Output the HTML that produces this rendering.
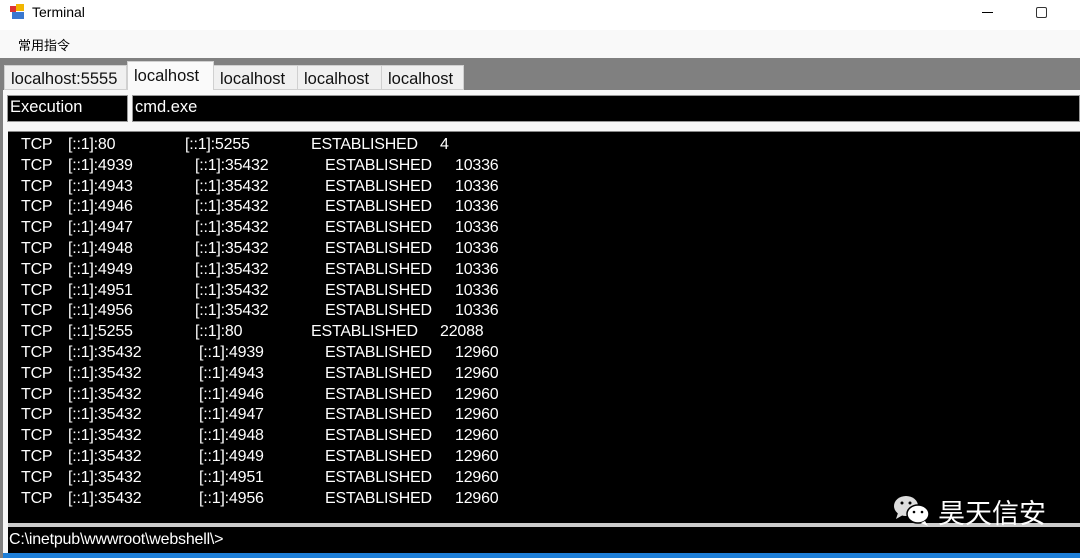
<!DOCTYPE html>
<html><head><meta charset="utf-8"><style>
body{margin:0;width:1080px;height:558px;overflow:hidden;background:#fff;position:relative;font-family:"Liberation Sans","Noto Sans CJK SC",sans-serif}
div,span{position:absolute}
.t{font-size:16px;color:#000;white-space:nowrap}
.w{color:#fff;font-family:"Liberation Sans Narrow","Liberation Sans",sans-serif;font-size:16px;white-space:nowrap;letter-spacing:-0.2px}
.tab{top:65px;height:25px;background:#f0f0f0;border:1px solid #d0d0d0;box-sizing:border-box;font-size:16.5px;color:#111;line-height:26px;padding-left:6px}
</style></head><body>
<div style="left:10px;top:6px;width:6px;height:6px;background:#d33"></div>
<div style="left:16px;top:4px;width:8px;height:7px;background:#f2b600"></div>
<div style="left:12px;top:12px;width:12px;height:7px;background:#3a78d0"></div>
<div class="t" style="left:32px;top:4px;font-size:14px">Terminal</div>
<div style="left:982px;top:12px;width:11px;height:1px;background:#000"></div>
<div style="left:1036px;top:7px;width:9px;height:9px;border:1.5px solid #333;border-radius:2px"></div>
<div style="left:0;top:30px;width:1080px;height:28px;background:#f9f9f9"></div>
<div class="t" style="left:18px;top:35px;font-size:13px">常用指令</div>
<div style="left:0;top:58px;width:1080px;height:32px;background:#808080"></div>
<div style="left:0;top:58px;width:3px;height:500px;background:#808080"></div>
<div class="tab" style="left:4px;width:123px">localhost:5555</div>
<div class="tab" style="left:127px;top:61px;height:30px;width:87px;background:#fafafa;line-height:28px">localhost</div>
<div class="tab" style="left:213px;width:85px">localhost</div>
<div class="tab" style="left:297px;width:85px">localhost</div>
<div class="tab" style="left:381px;width:83px">localhost</div>
<div style="left:3px;top:90px;width:1077px;height:468px;background:#f8f8f8"></div>
<div style="left:7px;top:95px;width:121px;height:27px;background:#000;border:1px solid #999;box-sizing:border-box"></div>
<div class="t" style="left:10px;top:98px;color:#fff;font-size:16.5px">Execution</div>
<div style="left:132px;top:95px;width:948px;height:27px;background:#000;border:1px solid #999;box-sizing:border-box"></div>
<div class="t" style="left:135px;top:98px;color:#fff;font-size:16.5px">cmd.exe</div>
<div style="left:8px;top:131px;width:1072px;height:392px;background:#000;border-top:1px solid #888"></div>
<div style="left:8px;top:523px;width:1072px;height:4px;background:#ccc"></div>
<div style="left:8px;top:527px;width:1072px;height:26px;background:#000"></div>
<div class="w" style="left:9px;top:531px">C:\inetpub\wwwroot\webshell\&gt;</div>
<div style="left:3px;top:553px;width:1077px;height:5px;background:#1e7fd8"></div>
<div id="rows"></div>
<svg style="position:absolute;left:892px;top:493px" width="42" height="34" viewBox="0 0 42 34"><ellipse cx="14" cy="13" rx="12" ry="10" fill="#ddd"/><path d="M6 20 L4 26 L11 22Z" fill="#ddd"/><ellipse cx="26" cy="21" rx="11" ry="9" fill="#fff" stroke="#000" stroke-width="1.5"/><path d="M33 28 L36 33 L29 30Z" fill="#fff"/><circle cx="10" cy="10" r="1.5" fill="#000"/><circle cx="18" cy="10" r="1.5" fill="#000"/><circle cx="22" cy="19" r="1.3" fill="#000"/><circle cx="30" cy="19" r="1.3" fill="#000"/></svg>
<div style="left:938px;top:492px;color:#fff;font-size:27px;font-family:'Noto Sans CJK SC',sans-serif">昊天信安</div>
<script>
var d=[["[::1]:80","[::1]:5255",185,"ESTABLISHED",311,"4",440]];
["4939","4943","4946","4947","4948","4949","4951","4956"].forEach(function(p){d.push(["[::1]:"+p,"[::1]:35432",195,"ESTABLISHED",325,"10336",455])});
d.push(["[::1]:5255","[::1]:80",195,"ESTABLISHED",311,"22088",440]);
["4939","4943","4946","4947","4948","4949","4951","4956"].forEach(function(p){d.push(["[::1]:35432","[::1]:"+p,199,"ESTABLISHED",325,"12960",455])});
var h="";d.forEach(function(r,i){var y=136+i*20.8;
h+='<span class="w" style="left:21px;top:'+y+'px">TCP</span><span class="w" style="left:68px;top:'+y+'px">'+r[0]+'</span><span class="w" style="left:'+r[2]+'px;top:'+y+'px">'+r[1]+'</span><span class="w" style="left:'+r[4]+'px;top:'+y+'px">'+r[3]+'</span><span class="w" style="left:'+r[6]+'px;top:'+y+'px">'+r[5]+'</span>';});
document.getElementById("rows").innerHTML=h;
</script>
</body></html>
